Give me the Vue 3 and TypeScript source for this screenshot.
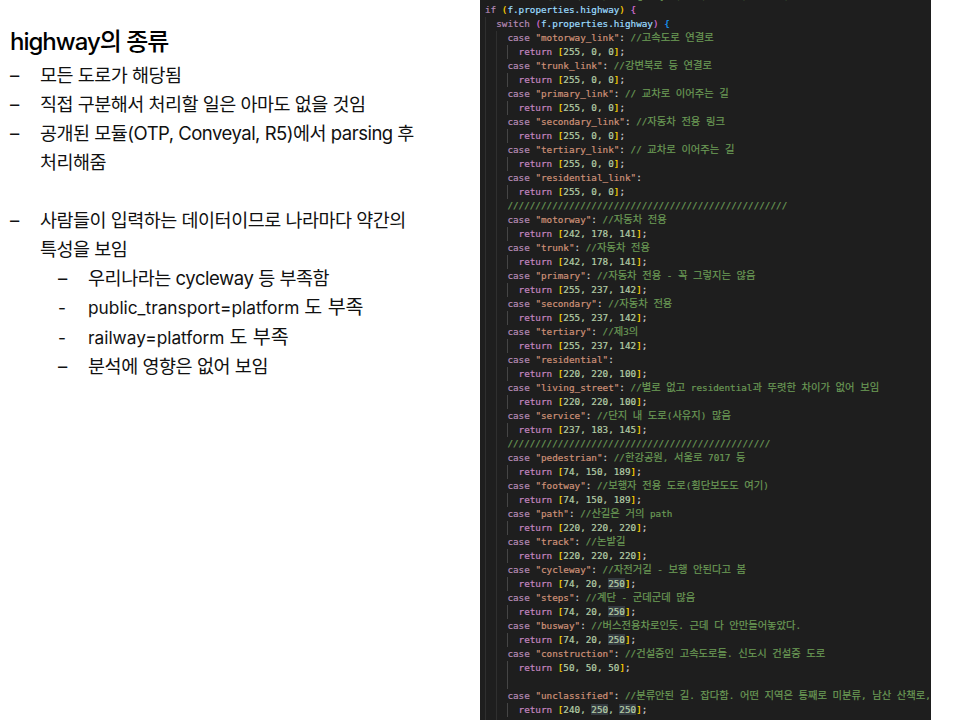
<script setup lang="ts">
type Tok = [string, string];
type Line = { ind: number; toks: Tok[] };
const C = 'kw', S = 'str', P = 'pl', G = 'com', R = 'ret', B = 'br', N = 'num', H = 'num hl';
const cs = (name: string, comment = ''): Line => ({
  ind: 2,
  toks: [['case ', C], [`"${name}"`, S], [':', P], ...(comment ? [[' ' + comment, G] as Tok] : [])],
});
const rt = (a: number, b: number, c: number): Line => {
  const nums: Tok[] = [];
  [a, b, c].forEach((v, i) => {
    nums.push([String(v), v === 250 ? H : N]);
    if (i < 2) nums.push([', ', N]);
  });
  return { ind: 3, toks: [['return ', R], ['[', B], ...nums, [']', B], [';', P]] };
};
const runs = (text: string): { s: string; k: boolean }[] =>
  text
    .split(/([\uac00-\ud7a3]+)/)
    .filter((s) => s.length > 0)
    .map((s) => ({ s, k: /[\uac00-\ud7a3]/.test(s) }));
const lines: Line[] = [
  { ind: 0, toks: [['  // 도로 종류별 색상 지정 (highway 속성 기준으로 구분함) 확인 필요', G]] },
  { ind: 0, toks: [['if ', C], ['(', B], ['f.properties.highway', 'var'], [')', B], [' ', P], ['{', 'br2']] },
  { ind: 1, toks: [['switch ', C], ['(', 'br2'], ['f.properties.highway', 'var'], [')', 'br2'], [' ', P], ['{', 'br3']] },
  cs('motorway_link', '//고속도로 연결로'), rt(255, 0, 0),
  cs('trunk_link', '//강변북로 등 연결로'), rt(255, 0, 0),
  cs('primary_link', '// 교차로 이어주는 길'), rt(255, 0, 0),
  cs('secondary_link', '//자동차 전용 링크'), rt(255, 0, 0),
  cs('tertiary_link', '// 교차로 이어주는 길'), rt(255, 0, 0),
  cs('residential_link'), rt(255, 0, 0),
  { ind: 2, toks: [['/'.repeat(50), G]] },
  cs('motorway', '//자동차 전용'), rt(242, 178, 141),
  cs('trunk', '//자동차 전용'), rt(242, 178, 141),
  cs('primary', '//자동차 전용 - 꼭 그렇지는 않음'), rt(255, 237, 142),
  cs('secondary', '//자동차 전용'), rt(255, 237, 142),
  cs('tertiary', '//제3의'), rt(255, 237, 142),
  cs('residential'), rt(220, 220, 100),
  cs('living_street', '//별로 없고 residential과 뚜렷한 차이가 없어 보임'), rt(220, 220, 100),
  cs('service', '//단지 내 도로(사유지) 많음'), rt(237, 183, 145),
  { ind: 2, toks: [['/'.repeat(47), G]] },
  cs('pedestrian', '//한강공원, 서울로 7017 등'), rt(74, 150, 189),
  cs('footway', '//보행자 전용 도로(횡단보도도 여기)'), rt(74, 150, 189),
  cs('path', '//산길은 거의 path'), rt(220, 220, 220),
  cs('track', '//논밭길'), rt(220, 220, 220),
  cs('cycleway', '//자전거길 - 보행 안된다고 봄'), rt(74, 20, 250),
  cs('steps', '//계단 - 군데군데 많음'), rt(74, 20, 250),
  cs('busway', '//버스전용차로인듯. 근데 다 안만들어놓았다.'), rt(74, 20, 250),
  cs('construction', '//건설중인 고속도로들. 신도시 건설중 도로'), rt(50, 50, 50),
  { ind: 3, toks: [] },
  cs('unclassified', '//분류안된 길. 잡다함. 어떤 지역은 통째로 미분류, 남산 산책로, 시골길 등'), rt(240, 250, 250),
  { ind: 2, toks: [['default', C], [':', P]] },
];
</script>

<template>
  <main class="slide">
    <section class="notes">
      <h1>highway의 종류</h1>
      <ul class="l1">
        <li>모든 도로가 해당됨</li>
        <li>직접 구분해서 처리할 일은 아마도 없을 것임</li>
        <li>공개된 모듈(OTP, Conveyal, R5)에서 parsing 후 처리해줌</li>
        <li class="blank"></li>
        <li>사람들이 입력하는 데이터이므로 나라마다 약간의 특성을 보임</li>
      </ul>
      <ul class="l2">
        <li>우리나라는 cycleway 등 부족함</li>
        <li class="small">public_transport=platform <span>도 부족</span></li>
        <li class="small">railway=platform <span>도 부족</span></li>
        <li>분석에 영향은 없어 보임</li>
      </ul>
    </section>
    <section class="code">
      <div class="rows">
        <div v-for="(ln, i) in lines" :key="i" class="row">
          <i v-for="g in ln.ind" :key="g" class="guide" :class="{ active: g === 3 }"></i>
          <span class="txt"><span v-for="(t, j) in ln.toks" :key="j" :class="t[1]"><template v-for="(r, m) in runs(t[0])" :key="m"><span v-if="r.k" class="ko">{{ r.s }}</span><template v-else>{{ r.s }}</template></template></span></span>
        </div>
      </div>
    </section>
  </main>
</template>

<style>
html, body { margin: 0; background: #fff; }
</style>

<style scoped>
.slide {
  width: 960px;
  height: 720px;
  display: flex;
  overflow: hidden;
  background: #fff;
  font-family: "Inter", "Noto Sans CJK KR", sans-serif;
  color: #111;
}
.notes { width: 480px; padding: 25px 0 0 10px; box-sizing: border-box; flex: none; }
h1 { margin: 0 0 2px; font-size: 24px; line-height: 34px; font-weight: 500; letter-spacing: -1px; color: #000; }
ul { list-style: none; margin: 0; padding: 0; }
.l1 { width: 385px; padding-left: 30px; }
.l1 li { font-size: 18.5px; line-height: 29px; position: relative; letter-spacing: -0.5px; }
.l1 li::before { content: "–"; position: absolute; left: -30px; }
.l1 li.blank { height: 29px; }
.l1 li.blank::before { content: ""; }
.l2 { padding-left: 78px; }
.l2 li { font-size: 18.5px; line-height: 29.3px; height: 29.3px; position: relative; letter-spacing: -0.45px; }
.l2 li::before { content: "–"; position: absolute; left: -30px; }
.l2 li.small { font-size: 17.3px; letter-spacing: 0; }
.l2 li.small::before { content: "-"; }
.l2 li.small span { font-size: 19.5px; line-height: 0; }
.code {
  width: 451px;
  height: 720px;
  flex: none;
  overflow: hidden;
  background: #1e1e1e;
}
.rows { margin-top: -11px; padding-left: 4.5px; }
.row {
  height: 14px;
  line-height: 14px;
  font-family: "DejaVu Sans Mono", "Noto Sans CJK KR", monospace;
  font-size: 9.3px;
  display: flex;
  color: #d4d4d4;
  -webkit-text-stroke: 0.2px currentColor;
}
.txt { white-space: pre; padding-left: 0.5px; }
.ko { font-family: "Noto Sans CJK KR", sans-serif; font-size: 10.3px; line-height: 0; }
.guide { display: block; flex: none; width: 11.2px; height: 14px; box-sizing: border-box; border-left: 1px solid #2f2f2f; }
.guide.active { border-left-color: #454545; }
.kw { color: #b58ab5; }
.str { color: #ce9178; }
.pl { color: #d4d4d4; }
.com { color: #6a9955; }
.ret { color: #c586c0; }
.br { color: #ffd700; }
.br2 { color: #da70d6; }
.br3 { color: #179fff; }
.num { color: #b5cea8; }
.hl { background: #343a40; }
.var { color: #9cdcfe; }
</style>
